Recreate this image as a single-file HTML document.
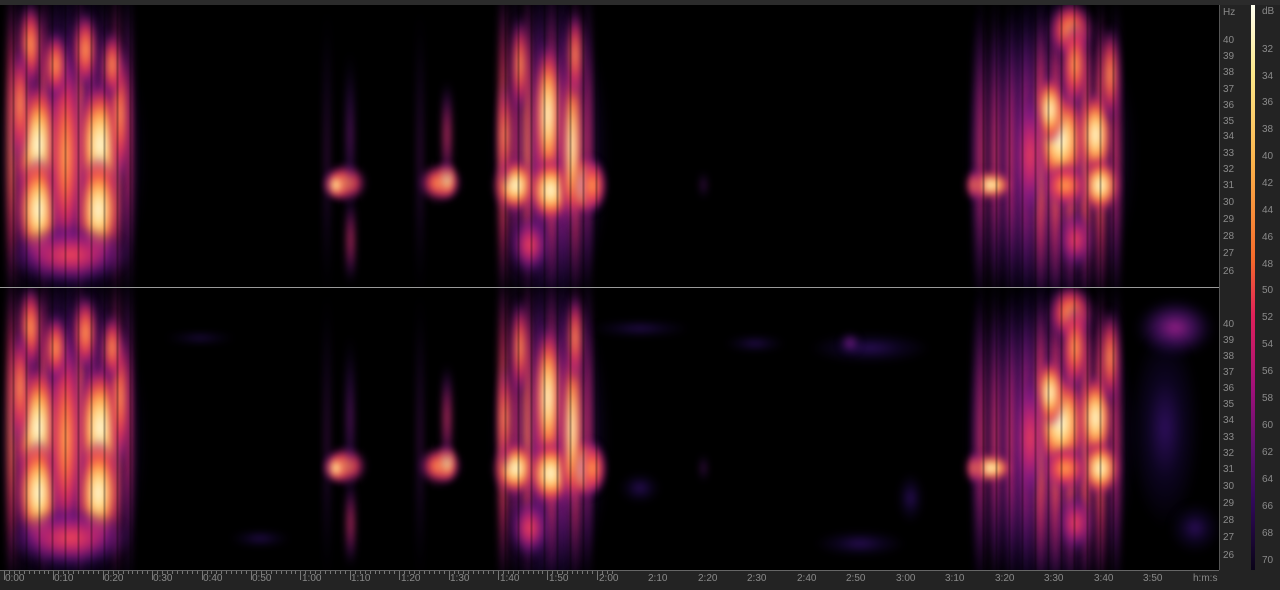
<!DOCTYPE html>
<html><head><meta charset="utf-8"><style>
html,body{margin:0;padding:0;background:#232323;width:1280px;height:589px;overflow:hidden;font-family:"Liberation Sans",sans-serif}
#top{position:absolute;left:0;top:0;width:1280px;height:5px;background:#2b2b2b}
.ch{position:absolute;left:0;width:1219px;background:#000;overflow:hidden}
#c1{top:5px;height:282px}
#c2{top:288px;height:282px}
#div{position:absolute;left:0;top:287px;width:1250px;height:1px;background:#9a9a9a}
.b{position:absolute;border-radius:50%;filter:blur(4px)}
.s{position:absolute;background:repeating-linear-gradient(90deg,rgba(0,0,0,0) 0 7px,rgba(0,0,0,.3) 8px 9px,rgba(0,0,0,0) 10px 13px)}
.axr{position:absolute;left:1219px;top:5px;width:31px;height:565px;border-left:1px solid #555;background:#232323}
.lab{position:absolute;font-size:10px;color:#8a8a8a}
.bar{position:absolute;left:1251px;top:5px;width:4px;height:565px;background:linear-gradient(#fffff0,#fbe88a 12%,#fbb24a 28%,#f56a2a 45%,#e0205a 55%,#a0107a 68%,#601070 78%,#300858 88%,#0a0418)}
.axb{position:absolute;left:0;top:570px;width:1219px;height:19px;border-top:1px solid #666;background:#232323}
.tk{position:absolute;top:0;width:1px;background:#777}
</style></head><body>
<div id="top"></div>
<div class="ch" id="c1"></div>
<div class="ch" id="c2"></div>
<div id="div"></div>
<div class="axr"></div>
<div class="bar"></div>
<div class="axb" id="axb"></div>
<div id="labs">
<div class="lab" style="left:1223px;top:7px">Hz</div>
<div class="lab" style="left:1223px;top:35px">40</div>
<div class="lab" style="left:1223px;top:51px">39</div>
<div class="lab" style="left:1223px;top:67px">38</div>
<div class="lab" style="left:1223px;top:84px">37</div>
<div class="lab" style="left:1223px;top:100px">36</div>
<div class="lab" style="left:1223px;top:116px">35</div>
<div class="lab" style="left:1223px;top:131px">34</div>
<div class="lab" style="left:1223px;top:148px">33</div>
<div class="lab" style="left:1223px;top:164px">32</div>
<div class="lab" style="left:1223px;top:180px">31</div>
<div class="lab" style="left:1223px;top:197px">30</div>
<div class="lab" style="left:1223px;top:214px">29</div>
<div class="lab" style="left:1223px;top:231px">28</div>
<div class="lab" style="left:1223px;top:248px">27</div>
<div class="lab" style="left:1223px;top:266px">26</div>
<div class="lab" style="left:1223px;top:319px">40</div>
<div class="lab" style="left:1223px;top:335px">39</div>
<div class="lab" style="left:1223px;top:351px">38</div>
<div class="lab" style="left:1223px;top:367px">37</div>
<div class="lab" style="left:1223px;top:383px">36</div>
<div class="lab" style="left:1223px;top:399px">35</div>
<div class="lab" style="left:1223px;top:415px">34</div>
<div class="lab" style="left:1223px;top:432px">33</div>
<div class="lab" style="left:1223px;top:448px">32</div>
<div class="lab" style="left:1223px;top:464px">31</div>
<div class="lab" style="left:1223px;top:481px">30</div>
<div class="lab" style="left:1223px;top:498px">29</div>
<div class="lab" style="left:1223px;top:515px">28</div>
<div class="lab" style="left:1223px;top:532px">27</div>
<div class="lab" style="left:1223px;top:550px">26</div>
<div class="lab" style="left:1262px;top:6px">dB</div>
<div class="lab" style="left:1262px;top:44px">32</div>
<div class="lab" style="left:1262px;top:71px">34</div>
<div class="lab" style="left:1262px;top:97px">36</div>
<div class="lab" style="left:1262px;top:124px">38</div>
<div class="lab" style="left:1262px;top:151px">40</div>
<div class="lab" style="left:1262px;top:178px">42</div>
<div class="lab" style="left:1262px;top:205px">44</div>
<div class="lab" style="left:1262px;top:232px">46</div>
<div class="lab" style="left:1262px;top:259px">48</div>
<div class="lab" style="left:1262px;top:285px">50</div>
<div class="lab" style="left:1262px;top:312px">52</div>
<div class="lab" style="left:1262px;top:339px">54</div>
<div class="lab" style="left:1262px;top:366px">56</div>
<div class="lab" style="left:1262px;top:393px">58</div>
<div class="lab" style="left:1262px;top:420px">60</div>
<div class="lab" style="left:1262px;top:447px">62</div>
<div class="lab" style="left:1262px;top:474px">64</div>
<div class="lab" style="left:1262px;top:501px">66</div>
<div class="lab" style="left:1262px;top:528px">68</div>
<div class="lab" style="left:1262px;top:555px">70</div>
<div class="lab" style="left:5px;top:573px">0:00</div>
<div class="lab" style="left:54px;top:573px">0:10</div>
<div class="lab" style="left:104px;top:573px">0:20</div>
<div class="lab" style="left:153px;top:573px">0:30</div>
<div class="lab" style="left:203px;top:573px">0:40</div>
<div class="lab" style="left:252px;top:573px">0:50</div>
<div class="lab" style="left:302px;top:573px">1:00</div>
<div class="lab" style="left:351px;top:573px">1:10</div>
<div class="lab" style="left:401px;top:573px">1:20</div>
<div class="lab" style="left:450px;top:573px">1:30</div>
<div class="lab" style="left:500px;top:573px">1:40</div>
<div class="lab" style="left:549px;top:573px">1:50</div>
<div class="lab" style="left:599px;top:573px">2:00</div>
<div class="lab" style="left:648px;top:573px">2:10</div>
<div class="lab" style="left:698px;top:573px">2:20</div>
<div class="lab" style="left:747px;top:573px">2:30</div>
<div class="lab" style="left:797px;top:573px">2:40</div>
<div class="lab" style="left:846px;top:573px">2:50</div>
<div class="lab" style="left:896px;top:573px">3:00</div>
<div class="lab" style="left:945px;top:573px">3:10</div>
<div class="lab" style="left:995px;top:573px">3:20</div>
<div class="lab" style="left:1044px;top:573px">3:30</div>
<div class="lab" style="left:1094px;top:573px">3:40</div>
<div class="lab" style="left:1143px;top:573px">3:50</div>
<div class="lab" style="left:1193px;top:573px">h:m:s</div>
</div>
<script>
var G={
5:'rgba(255,252,230,1) 0%,rgba(255,220,140,1) 28%,rgba(255,160,75,1) 48%,rgba(240,80,70,.9) 65%,rgba(190,35,115,.6) 82%,rgba(90,20,130,.25) 93%,rgba(0,0,0,0) 100%',
4:'rgba(255,175,90,1) 0%,rgba(250,110,65,1) 30%,rgba(225,50,90,.9) 55%,rgba(160,30,130,.6) 77%,rgba(70,15,110,.25) 92%,rgba(0,0,0,0) 100%',
3:'rgba(240,70,85,1) 0%,rgba(200,40,110,.9) 35%,rgba(130,25,140,.6) 65%,rgba(60,15,110,.25) 88%,rgba(0,0,0,0) 100%',
2:'rgba(165,35,150,.9) 0%,rgba(100,25,140,.6) 45%,rgba(40,12,90,.25) 80%,rgba(0,0,0,0) 100%',
1:'rgba(70,22,140,.65) 0%,rgba(35,12,90,.35) 50%,rgba(0,0,0,0) 100%'};
function blob(c,x,y,w,h,l){var d=document.createElement('div');d.className='b';d.style.cssText='left:'+(x-w/2)+'px;top:'+(y-h/2)+'px;width:'+w+'px;height:'+h+'px;background:radial-gradient(ellipse closest-side,'+G[l]+')';c.appendChild(d)}
function stripe(c,x,y,w,h){var d=document.createElement('div');d.className='s';d.style.cssText='left:'+x+'px;top:'+y+'px;width:'+w+'px;height:'+h+'px';c.appendChild(d)}
var common=[];
// halos
common.push([72,150,150,330,2],[550,150,120,330,2],[1050,150,175,330,2]);
// burst 1 streaks
[12,22,32,44,56,68,80,92,104,116,128].forEach(function(x,i){common.push([x,140,12,330,i%3==0?4:3]);});
common.push([38,140,50,130,5],[100,140,50,130,5],[38,205,45,110,5],[98,205,45,110,5],[30,40,25,90,4],[85,45,25,80,4],[65,150,35,220,4],[70,250,120,60,3],[20,100,20,120,4],[120,110,20,140,4],[55,60,25,70,4],[112,60,20,70,4]);
// burst 2
common.push([345,178,42,38,4],[336,180,22,26,5],[350,130,8,170,2],[350,235,9,90,3],[327,150,4,300,2]);
// burst 3
common.push([440,178,42,38,4],[447,175,18,36,5],[447,130,10,110,3],[420,150,4,300,2]);
// burst 4 streaks
[503,515,527,539,551,563,575,587].forEach(function(x,i){common.push([x,140,11,330,i%2==0?4:3]);});
common.push([548,110,28,150,5],[515,180,45,55,5],[550,185,45,65,5],[582,180,45,60,5],[572,140,20,170,5],[505,130,14,110,4],[592,180,28,55,4],[530,240,40,60,3],[520,60,18,100,4],[575,50,16,90,4]);
// burst 5
[980,995,1010,1025,1040,1055,1070,1085,1100,1115].forEach(function(x,i){common.push([x,150,13,320,i>3&&i<9?4:3]);});
common.push([1060,135,55,100,5],[1095,130,35,90,5],[1100,180,40,55,5],[1050,105,30,70,5],[1070,25,45,60,4],[1075,60,28,90,4],[990,180,45,28,5],[975,180,18,32,4],[1065,180,45,45,4],[1075,235,35,60,3],[1030,150,30,130,3],[1110,70,20,100,4],[975,150,4,300,2],[703,180,5,28,2]);
var c1=document.getElementById('c1'),c2=document.getElementById('c2');
common.forEach(function(b){blob(c1,b[0],b[1],b[2],b[3],b[4]);blob(c2,b[0],b[1],b[2],b[3],b[4]);});
[[5,0,138,282],[497,0,108,282],[975,0,155,282]].forEach(function(s){stripe(c1,s[0],s[1],s[2],s[3]);stripe(c2,s[0],s[1],s[2],s[3]);});
var extra=[[1175,40,80,60,2],[1165,140,70,200,1],[1195,240,50,50,1],[870,60,120,30,1],[860,255,90,25,1],[640,40,100,15,1],[755,55,60,15,1],[200,50,70,10,1],[260,250,60,15,1],[640,200,40,30,1],[850,55,20,20,2],[910,210,25,50,1]];
extra.forEach(function(b){blob(c2,b[0],b[1],b[2],b[3],b[4]);});
var ax=document.getElementById('axb');
for(var i=0;i<=123;i++){var x=4+i*4.94;if(x>1218)break;var t=document.createElement('div');t.className='tk';t.style.left=x+'px';t.style.height=(i%10==0?'9px':'3px');ax.appendChild(t);}
</script>
</body></html>
